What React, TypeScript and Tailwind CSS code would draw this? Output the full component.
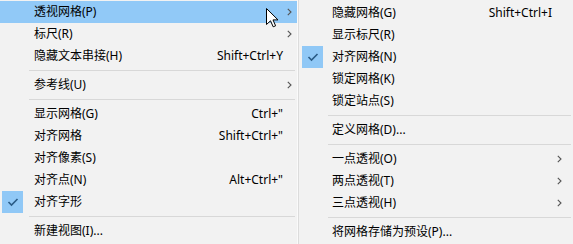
import React from 'react';

type Item =
    | { sep: true }
    | { sep?: false; label: string; shortcut?: string; sub?: boolean; checked?: boolean; active?: boolean };

const leftItems: Item[] = [
    { label: '透视网格(P)', sub: true, active: true },
    { label: '标尺(R)', sub: true },
    { label: '隐藏文本串接(H)', shortcut: 'Shift+Ctrl+Y' },
    { sep: true },
    { label: '参考线(U)', sub: true },
    { sep: true },
    { label: '显示网格(G)', shortcut: 'Ctrl+"' },
    { label: '对齐网格', shortcut: 'Shift+Ctrl+"' },
    { label: '对齐像素(S)' },
    { label: '对齐点(N)', shortcut: 'Alt+Ctrl+"' },
    { label: '对齐字形', checked: true },
    { sep: true },
    { label: '新建视图(I)...' },
];

const rightItems: Item[] = [
    { label: '隐藏网格(G)', shortcut: 'Shift+Ctrl+I' },
    { label: '显示标尺(R)' },
    { label: '对齐网格(N)', checked: true },
    { label: '锁定网格(K)' },
    { label: '锁定站点(S)' },
    { sep: true },
    { label: '定义网格(D)...' },
    { sep: true },
    { label: '一点透视(O)', sub: true },
    { label: '两点透视(T)', sub: true },
    { label: '三点透视(H)', sub: true },
    { sep: true },
    { label: '将网格存储为预设(P)...' },
];

function Chevron() {
    return (
        <svg width="5" height="8" viewBox="0 0 5 8" className="block">
            <path d="M0.8 0.8 L4 4 L0.8 7.2" fill="none" stroke="#555" strokeWidth="1.1" />
        </svg>
    );
}

function Check() {
    return (
        <svg width="12" height="10" viewBox="0 0 12 10" className="block">
            <path d="M1.5 5 L4.5 8 L10.5 2" fill="none" stroke="#2a5b86" strokeWidth="1.6" />
        </svg>
    );
}

function Menu({ items, textLeft, checkLeft, arrowSlot, arrowPad, className }: {
    items: Item[];
    textLeft: string;
    checkLeft: string;
    arrowSlot: string;
    arrowPad: string;
    className: string;
}) {
    return (
        <div className={className}>
            {items.map((it, i) =>
                it.sep ? (
                    <div key={i} className="h-[7px] flex items-center pl-[29px] pr-[2px]">
                        <div className="h-px w-full bg-[#d8d8d8]" />
                    </div>
                ) : (
                    <div key={i} className={`relative h-[22px] flex items-center ${it.active ? 'bg-[#91c9f7]' : ''}`}>
                        {it.checked && (
                            <div className={`absolute top-0 ${checkLeft} w-[21px] h-[22px] bg-[#90c8f6] flex items-center justify-center`}>
                                <Check />
                            </div>
                        )}
                        <span className={`${textLeft} flex-1 whitespace-nowrap`}>{it.label}</span>
                        {it.shortcut && <span className="whitespace-nowrap">{it.shortcut}</span>}
                        <span className={`${arrowSlot} ${arrowPad} flex items-center`}>{it.sub && <Chevron />}</span>
                    </div>
                )
            )}
        </div>
    );
}

export default function App() {
    return (
        <div
            className="relative w-[573px] h-[244px] overflow-hidden bg-[#f2f2f2] text-[12px] leading-[22px] text-black flex"
            style={{ fontFamily: '"Segoe UI", "Noto Sans", "Noto Sans CJK SC", sans-serif' }}
        >
            <Menu
                items={leftItems}
                className="w-[297px] shrink-0 pt-px"
                textLeft="pl-[34px]"
                checkLeft="left-[2px]"
                arrowSlot="w-[14px]"
                arrowPad="pl-[4px]"
            />
            <div className="w-px bg-[#fafafa]" />
            <div className="w-px bg-[#dcdcdc]" />
            <Menu
                items={rightItems}
                className="flex-1 pt-[2px]"
                textLeft="pl-[33px]"
                checkLeft="left-[3px]"
                arrowSlot="w-[21px]"
                arrowPad="pl-[5px]"
            />

            {/* mouse pointer */}
            <svg className="absolute left-[266px] top-[8px]" width="13" height="20" viewBox="0 0 13 20">
                <path d="M0.5 0.5 L0.5 16.5 L4.5 12.8 L7.2 18.8 L9.6 17.8 L7 11.9 L12 11.9 Z" fill="#fff" stroke="#000" strokeWidth="1" strokeLinejoin="round" />
            </svg>
        </div>
    );
}
